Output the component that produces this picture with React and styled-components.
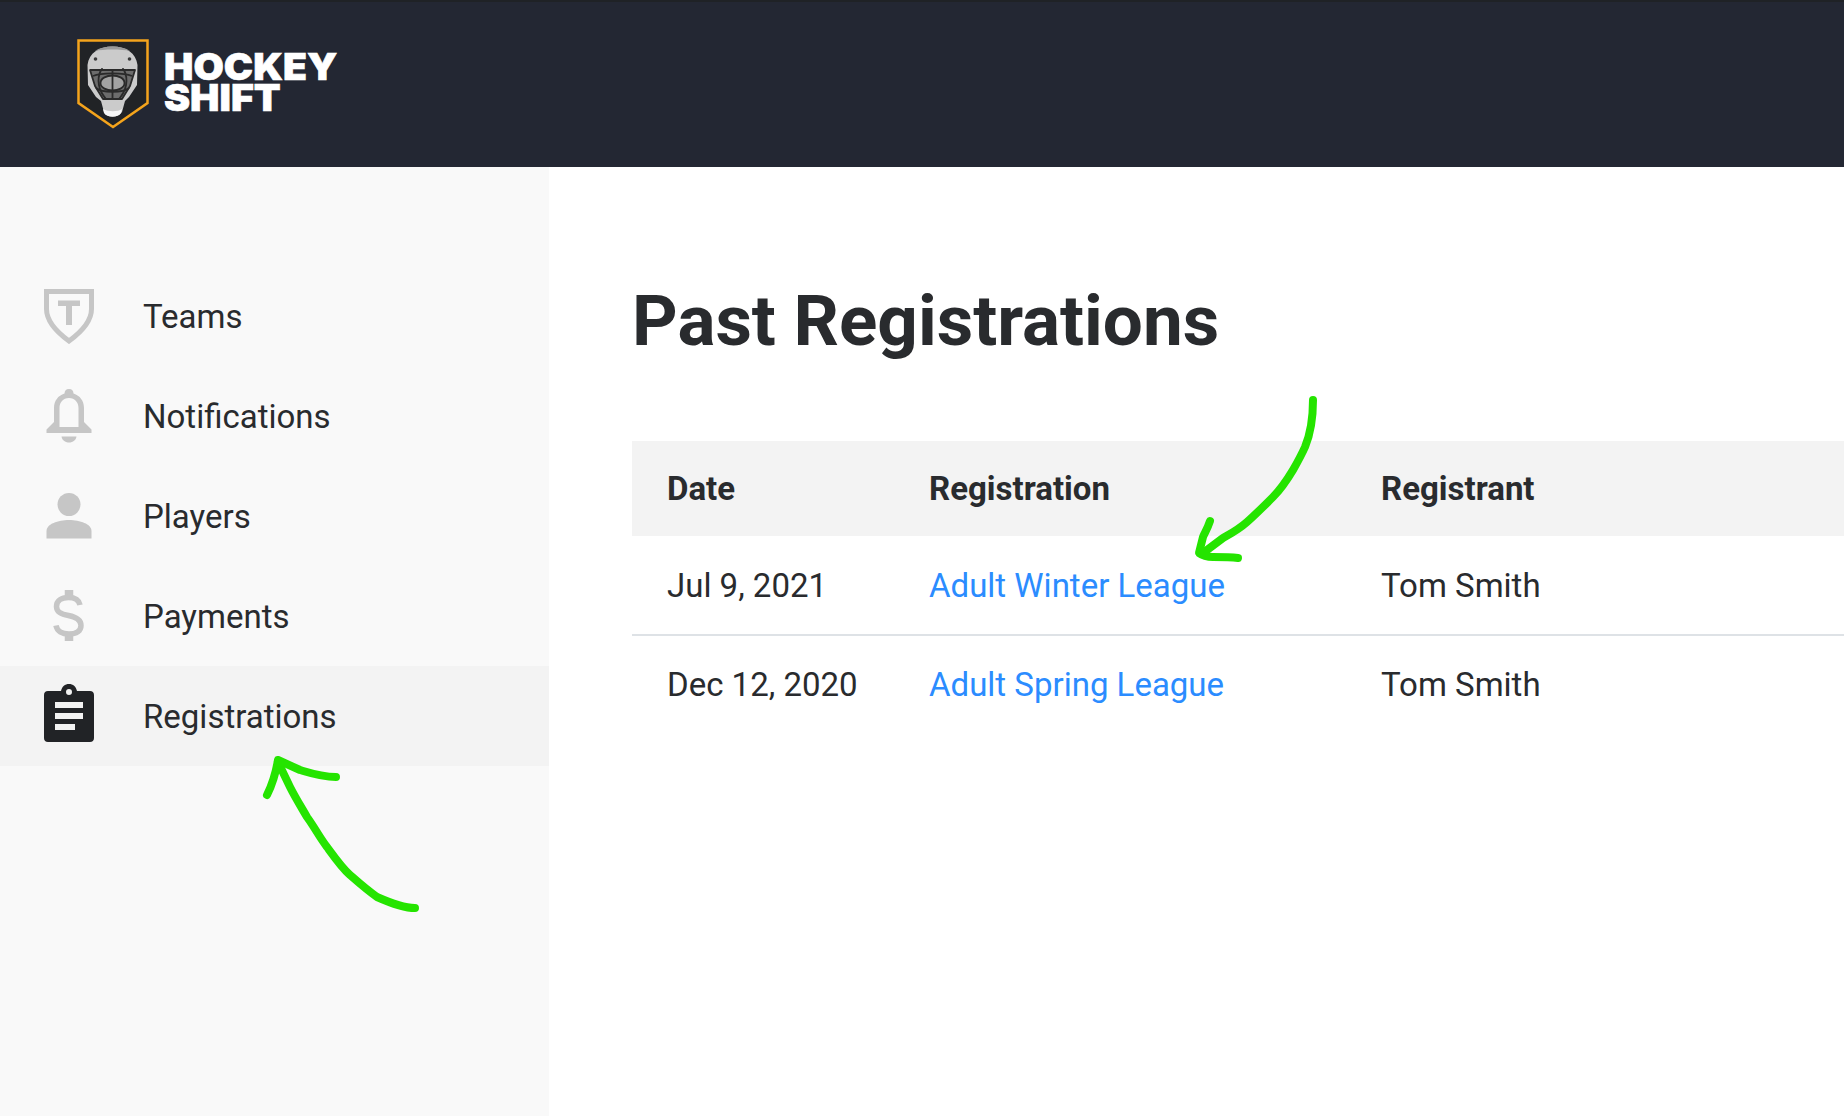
import React from 'react'
import styled, { createGlobalStyle } from 'styled-components'

const GlobalStyle = createGlobalStyle`
  html, body {
    margin: 0;
    background: #fff;
  }
  body {
    width: 1844px;
    height: 1116px;
    overflow: hidden;
    font-family: Roboto, "Liberation Sans", sans-serif;
    color: #212529;
  }
`

const Page = styled.div`
  position: relative;
  width: 1844px;
  height: 1116px;
  overflow: hidden;
  display: flex;
  flex-direction: column;
`
const Header = styled.header`
  height: 167px;
  flex-shrink: 0;
  background: #232733;
  border-top: 2px solid #1f2226;
  display: flex;
  align-items: flex-start;
  padding: 37px 0 0 77px;
  box-sizing: border-box;
  gap: 15px;
`
const LogoText = styled.div`
  font-family: Inter, "Liberation Sans", sans-serif;
  font-weight: 900;
  font-size: 37px;
  line-height: 31px;
  color: #fff;
  padding-top: 12px;
  -webkit-text-stroke: 0.6px #fff;
  transform: scaleX(1.06);
  transform-origin: left top;
`
const Body = styled.div`
  flex: 1;
  display: flex;
  min-height: 0;
`
const Sidebar = styled.nav`
  width: 549px;
  flex-shrink: 0;
  background: #f9f9f9;
  padding-top: 99px;
  box-sizing: border-box;
`
const NavItem = styled.a`
  display: flex;
  align-items: center;
  height: 100px;
  font-size: 33px;
  color: #292b2e;
  background: ${(p) => (p.$active ? '#f3f3f3' : 'transparent')};
`
const NavIcon = styled.span`
  width: 143px;
  padding-left: 44px;
  padding-bottom: ${(p) => (p.$active ? '6px' : '0')};
  box-sizing: border-box;
  display: flex;
  flex-shrink: 0;
  color: ${(p) => (p.$active ? '#212326' : '#c6c6c6')};
`
const Main = styled.main`
  flex: 1;
  padding: 0 0 0 83px;
`
const Title = styled.h1`
  margin: 0;
  padding-top: 112px;
  font-size: 71px;
  line-height: 84px;
  font-weight: 700;
  color: #292b2e;
`
const Table = styled.table`
  margin-top: 78px;
  width: 100%;
  border-collapse: collapse;
  table-layout: fixed;
  font-size: 33px;
  color: #292b2e;
`
const HeadRow = styled.tr`
  background: #f3f3f3;
  height: 95px;
`
const Row = styled.tr`
  height: ${(p) => (p.$last ? '97px' : '99px')};
  border-bottom: ${(p) => (p.$last ? 'none' : '2px solid #dee2e6')};
`
const Th = styled.th`
  text-align: left;
  box-sizing: border-box;
  padding: 0 0 0 35px;
  font-weight: 700;
  width: ${(p) => p.$width || 'auto'};
`
const Td = styled.td`
  padding: 0 0 0 35px;
  font-weight: 400;
`
const RegLink = styled.a`
  color: #2b8cff;
`
const Annotations = styled.svg`
  position: absolute;
  left: 0;
  top: 0;
  pointer-events: none;
`

const ShieldLogo = () => (
  <svg width="72" height="90" viewBox="0 0 72 90">
    <path d="M1.5 1.5H70.500V64L36 88L1.500 64Z" fill="#212326" stroke="#f5a41c" strokeWidth="2.5" />
    <path d="M10.500 26C12 14 22 7.500 35.500 7.500C49 7.500 59 14 60.500 26L60 46L52 58L48 62L45 73C41 79 30 79 27 73L24 62L19 58L11 46Z" fill="#cbcbcb" />
    <path d="M18 12C26 6 45 6 53 12C45 10 26 10 18 12Z" fill="#9b9b9b" />
    <circle cx="18.500" cy="20" r="1.800" fill="#3a3a3a" />
    <circle cx="52.500" cy="20" r="1.800" fill="#3a3a3a" />
    <path d="M26 70C31 73 41 73 45 70L44 74C41 79 30 79 27 74Z" fill="#f7f7f7" />
    <path d="M13 31H58L53 47L45 60H26L18 47Z" fill="#6c6c6c" stroke="#2a2a2a" strokeWidth="1.800" strokeLinejoin="round" />
    <ellipse cx="35.500" cy="44" rx="12" ry="7.500" fill="#a3a3a3" />
    <g fill="none" stroke="#2a2a2a" strokeWidth="1.800">
      <path d="M16 37C24 33.500 47 33.500 55 37" />
      <path d="M23.500 44C23.500 39 30 36.500 35.500 36.500C41 36.500 47.500 39 47.500 44C47.500 49 41 51.500 35.500 51.500C30 51.500 23.500 49 23.500 44Z" />
      <path d="M19 49C25 54 46 54 52 49" />
      <path d="M24 31C19 41 22 52 29 60" />
      <path d="M47 31C52 41 49 52 42 60" />
      <path d="M35.500 31V60" />
    </g>
    <circle cx="25" cy="30" r="1" fill="#2a2a2a" />
    <circle cx="46" cy="30" r="1" fill="#2a2a2a" />
  </svg>
)

const ShieldIcon = () => (
  <svg width="50" height="55" viewBox="0 0 50 55">
    <path d="M2.500 2.500H47.500V20C47.500 33 36 44 25 52C14 44 2.500 33 2.500 20Z" fill="none" stroke="currentColor" strokeWidth="5" />
    <path d="M14 11.500H36V17H28V36H22V17H14Z" fill="currentColor" />
  </svg>
)
const BellIcon = () => (
  <svg width="50" height="54" viewBox="0 0 50 54" fill="currentColor">
    <path fillRule="evenodd" d="M25 0C28 0 29.500 2 29.500 4.500C36 6.500 40 12 40 19V33L47.500 40.500V44H2.500V40.500L10 33V19C10 12 14 6.500 20.500 4.500C20.500 2 22 0 25 0ZM25 9C19 9 15.500 13.500 15.500 19V38H34.500V19C34.500 13.500 31 9 25 9Z" />
    <path d="M17.500 47.500H32.500C32 51 29 53.500 25 53.500C21 53.500 18 51 17.500 47.500Z" />
  </svg>
)
const PersonIcon = () => (
  <svg width="50" height="46" viewBox="0 0 50 46" fill="currentColor">
    <circle cx="25" cy="11.500" r="11.500" />
    <path d="M2.500 45.500V38C2.500 31 14 27 25 27C36 27 47.500 31 47.500 38V45.500Z" />
  </svg>
)
const DollarIcon = () => (
  <svg width="50" height="52" viewBox="0 0 50 52" fill="none" stroke="currentColor">
    <path d="M25 0V9M25 43V51" strokeWidth="8.500" />
    <path d="M36 15C35 10 31 7.500 24.500 7.500C17 7.500 12.500 11 12.500 16.500C12.500 22 17 24 24.500 25.500C32 27 37 29.500 37 35.500C37 41 32.500 44 25 44C18 44 13 41 12 35.500" strokeWidth="5.500" />
  </svg>
)
const ClipboardIcon = () => (
  <svg width="50" height="58" viewBox="0 0 50 58" fill="currentColor">
    <path
      fillRule="evenodd"
      d="M25 0C29 0 32 2.500 33 7H46C48.500 7 50 8.500 50 11V54C50 56.500 48.500 58 46 58H4C1.500 58 0 56.500 0 54V11C0 8.500 1.500 7 4 7H17C18 2.500 21 0 25 0ZM25 5A3 3 0 1 0 25 11A3 3 0 0 0 25 5ZM11 18V24H39V18ZM11 29V35H39V29ZM11 40V46H31V40Z"
    />
  </svg>
)

const navItems = [
  { label: 'Teams', icon: <ShieldIcon /> },
  { label: 'Notifications', icon: <BellIcon /> },
  { label: 'Players', icon: <PersonIcon /> },
  { label: 'Payments', icon: <DollarIcon /> },
  { label: 'Registrations', icon: <ClipboardIcon />, active: true },
]

const rows = [
  { date: 'Jul 9, 2021', name: 'Adult Winter League', by: 'Tom Smith' },
  { date: 'Dec 12, 2020', name: 'Adult Spring League', by: 'Tom Smith' },
]

const App = () => (
  <Page>
    <GlobalStyle />
    <Header>
      <ShieldLogo />
      <LogoText>
        HOCKEY
        <br />
        SHIFT
      </LogoText>
    </Header>
    <Body>
      <Sidebar>
        {navItems.map((item) => (
          <NavItem key={item.label} $active={item.active}>
            <NavIcon $active={item.active}>{item.icon}</NavIcon>
            {item.label}
          </NavItem>
        ))}
      </Sidebar>
      <Main>
        <Title>Past Registrations</Title>
        <Table>
          <thead>
            <HeadRow>
              <Th $width="262px">Date</Th>
              <Th $width="452px">Registration</Th>
              <Th>Registrant</Th>
            </HeadRow>
          </thead>
          <tbody>
            {rows.map((row, i) => (
              <Row key={row.name} $last={i === rows.length - 1}>
                <Td>{row.date}</Td>
                <Td>
                  <RegLink>{row.name}</RegLink>
                </Td>
                <Td>{row.by}</Td>
              </Row>
            ))}
          </tbody>
        </Table>
      </Main>
    </Body>
    {/* hand drawn arrows on top of the screenshot */}
    <Annotations width="1844" height="1116" fill="none" stroke="#25e400" strokeWidth="8" strokeLinecap="round" strokeLinejoin="round">
      <path d="M415 908C405 908 395 905 377 897C367 890 358 882 350 875C342 868 335 858 327 847C320 838 315 828 307 817C300 805 295 797 290 787L278 762" />
      <path d="M267 795C272 785 276 772 278 760L300 770C310 773 322 777 336 777" />
      <path d="M1313 400C1313 415 1312 430 1305 447C1301 456 1297 463 1293 470C1287 480 1280 490 1273 497C1265 505 1255 515 1247 522C1238 530 1230 534 1223 538L1203 553" />
      <path d="M1210 521C1207 530 1205 532 1203 537L1199 553C1203 556 1208 557 1213 557C1222 557 1230 557 1238 558" />
    </Annotations>
  </Page>
)

export default App
